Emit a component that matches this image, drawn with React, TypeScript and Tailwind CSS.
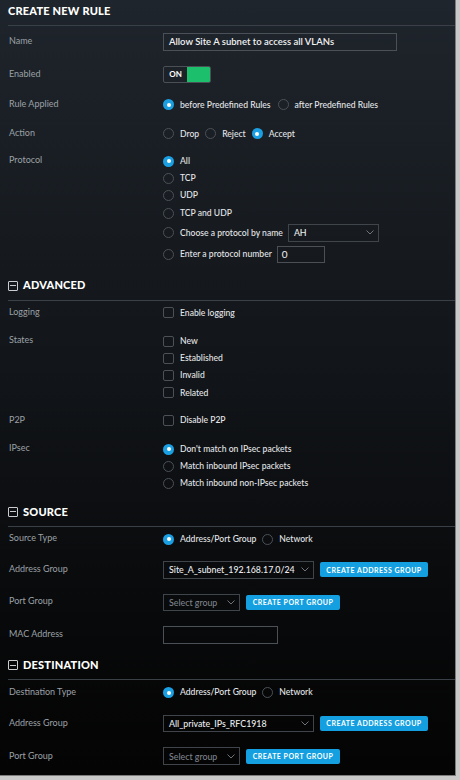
import React from "react";

const Radio = ({ checked }: { checked?: boolean }) =>
  checked ? (
    <span className="flex h-[11px] w-[11px] shrink-0 items-center justify-center rounded-full bg-[#1a9fe3]">
      <span className="h-[4px] w-[4px] rounded-full bg-white" />
    </span>
  ) : (
    <span className="h-[11px] w-[11px] shrink-0 rounded-full border border-[#4b5157]" />
  );

const Check = () => (
  <span className="h-[11px] w-[11px] shrink-0 rounded-[2px] border border-[#4b5157]" />
);

const Chevron = () => (
  <svg width="8" height="5" viewBox="0 0 8 5" className="shrink-0">
    <path d="M0.5 0.5 L4 4 L7.5 0.5" fill="none" stroke="#7a8087" strokeWidth="0.9" />
  </svg>
);

const Opt = ({ checked, text, radio = true }: { checked?: boolean; text: string; radio?: boolean }) => (
  <span className="flex items-center">
    {radio ? <Radio checked={checked} /> : <Check />}
    <span className="ml-[6px] text-[8.6px] font-medium text-[#e4e6e8]">{text}</span>
  </span>
);

const Label = ({ text }: { text: string }) => (
  <div className="w-[154px] shrink-0 pb-[2px] text-[#9ba1a7]">{text}</div>
);

const Section = ({ title, className }: { title: string; className: string }) => (
  <div className={"ml-[8px] border-b border-[#394047] pb-[7px] " + className}>
    <div className="flex h-[14px] items-center">
      <span className="flex h-[10px] w-[10px] items-center justify-center rounded-[1px] border border-[#c9ccd0]">
        <span className="h-[1px] w-[6px] bg-[#c9ccd0]" />
      </span>
      <span className="ml-[5px] text-[11px] font-black tracking-[0.2px] text-white">{title}</span>
    </div>
  </div>
);

const Btn = ({ text, w }: { text: string; w: string }) => (
  <span
    className={
      "flex h-[15px] items-center justify-center rounded-[2px] bg-[#139fe0] text-[7px] font-bold tracking-[0.5px] text-white " +
      w
    }
  >
    {text}
  </span>
);

const Select = ({ value, w, muted }: { value: string; w: string; muted?: boolean }) => (
  <span
    className={
      "flex h-full items-center justify-between border border-[#3f454b] pl-[5px] pr-[4px] text-[8.8px] font-medium " +
      w +
      (muted ? " text-[#7d838a]" : " text-[#eceef0]")
    }
  >
    <span>{value}</span>
    <Chevron />
  </span>
);

export default function App() {
  return (
    <div className="h-[780px] w-[460px] bg-[#c9c9c9]" style={{ fontFamily: "Lato, 'Open Sans', sans-serif" }}>
      <div className="h-[776px] w-[456px] overflow-hidden border-r border-b border-[#7c7c7c] bg-gradient-to-b from-[#1f252c] via-[#111418] to-[#040404] text-[9px]">
        {/* header */}
        <div className="ml-[8px] border-b border-[#394047] pt-[4px] pb-[7px]">
          <div className="flex h-[14px] items-center text-[11px] font-black tracking-[0.2px] text-white">
            CREATE NEW RULE
          </div>
        </div>

        <div className="pl-[9px]">
          <div className="mt-[7px] flex h-[17.5px] items-center">
            <Label text="Name" />
            <span className="flex h-full w-[234px] items-center border border-[#4a5056] pl-[5px] text-[9.5px] font-semibold text-[#f0f1f2]">
              Allow Site A subnet to access all VLANs
            </span>
          </div>

          <div className="mt-[15px] flex h-[17.5px] items-center">
            <Label text="Enabled" />
            <span className="flex h-full w-[48px] overflow-hidden rounded-[2px] border border-[#4a5056]">
              <span className="flex w-[23px] items-center justify-center text-[8px] font-bold text-white">ON</span>
              <span className="flex-1 bg-[#1cbf6c]" />
            </span>
          </div>

          <div className="mt-[13.5px] flex h-[17px] items-center">
            <Label text="Rule Applied" />
            <span className="flex items-center gap-[7px]">
              <Opt checked text="before Predefined Rules" />
              <Opt text="after Predefined Rules" />
            </span>
          </div>

          <div className="mt-[12px] flex h-[17px] items-center">
            <Label text="Action" />
            <span className="flex items-center gap-[6px]">
              <Opt text="Drop" />
              <Opt text="Reject" />
              <Opt checked text="Accept" />
            </span>
          </div>

          <div className="mt-[10px] flex items-start">
            <div className="flex h-[17.3px] items-center">
              <Label text="Protocol" />
            </div>
            <div className="flex flex-col">
              <div className="flex h-[17.3px] items-center"><Opt checked text="All" /></div>
              <div className="flex h-[17.3px] items-center"><Opt text="TCP" /></div>
              <div className="flex h-[17.3px] items-center"><Opt text="UDP" /></div>
              <div className="flex h-[17.3px] items-center"><Opt text="TCP and UDP" /></div>
              <div className="mt-[2.6px] flex h-[17.4px] items-center">
                <Opt text="Choose a protocol by name" />
                <span className="ml-[5px] h-full">
                  <Select value="AH" w="w-[91px]" />
                </span>
              </div>
              <div className="mt-[4.6px] flex h-[17px] items-center">
                <Opt text="Enter a protocol number" />
                <span className="ml-[5px] flex h-full w-[48px] items-center border border-[#4a5056] pl-[4px] text-[10px] text-[#f0f1f2]">
                  0
                </span>
              </div>
            </div>
          </div>
        </div>

        <Section title="ADVANCED" className="mt-[15.4px]" />

        <div className="pl-[9px]">
          <div className="mt-[3.8px] flex h-[17px] items-center">
            <Label text="Logging" />
            <Opt radio={false} text="Enable logging" />
          </div>

          <div className="mt-[11px] flex items-start">
            <div className="flex h-[17.3px] items-center">
              <Label text="States" />
            </div>
            <div className="flex flex-col">
              {["New", "Established", "Invalid", "Related"].map((s) => (
                <div key={s} className="flex h-[17.3px] items-center">
                  <Opt radio={false} text={s} />
                </div>
              ))}
            </div>
          </div>

          <div className="mt-[10.8px] flex h-[17px] items-center">
            <Label text="P2P" />
            <Opt radio={false} text="Disable P2P" />
          </div>

          <div className="mt-[11.3px] flex items-start">
            <div className="flex h-[17px] items-center">
              <Label text="IPsec" />
            </div>
            <div className="flex flex-col">
              <div className="flex h-[17px] items-center"><Opt checked text="Don't match on IPsec packets" /></div>
              <div className="flex h-[17px] items-center"><Opt text="Match inbound IPsec packets" /></div>
              <div className="flex h-[17px] items-center"><Opt text="Match inbound non-IPsec packets" /></div>
            </div>
          </div>
        </div>

        <Section title="SOURCE" className="mt-[13.2px]" />

        <div className="pl-[9px]">
          <div className="mt-[3.8px] flex h-[17px] items-center">
            <Label text="Source Type" />
            <span className="flex items-center gap-[6px]">
              <Opt checked text="Address/Port Group" />
              <Opt text="Network" />
            </span>
          </div>

          <div className="mt-[13.5px] flex h-[17.3px] items-center">
            <Label text="Address Group" />
            <Select value="Site_A_subnet_192.168.17.0/24" w="w-[151px]" />
            <span className="ml-[6px]"><Btn text="CREATE ADDRESS GROUP" w="w-[108px]" /></span>
          </div>

          <div className="mt-[15px] flex h-[17.4px] items-center">
            <Label text="Port Group" />
            <Select value="Select group" w="w-[77px]" muted />
            <span className="ml-[6px]"><Btn text="CREATE PORT GROUP" w="w-[94px]" /></span>
          </div>

          <div className="mt-[15.3px] flex h-[17.4px] items-center">
            <Label text="MAC Address" />
            <span className="h-full w-[115px] border border-[#4a5056]" />
          </div>
        </div>

        <Section title="DESTINATION" className="mt-[14.6px]" />

        <div className="pl-[9px]">
          <div className="mt-[4.2px] flex h-[17px] items-center">
            <Label text="Destination Type" />
            <span className="flex items-center gap-[6px]">
              <Opt checked text="Address/Port Group" />
              <Opt text="Network" />
            </span>
          </div>

          <div className="mt-[13.3px] flex h-[17.3px] items-center">
            <Label text="Address Group" />
            <Select value="All_private_IPs_RFC1918" w="w-[151px]" />
            <span className="ml-[6px]"><Btn text="CREATE ADDRESS GROUP" w="w-[108px]" /></span>
          </div>

          <div className="mt-[15.5px] flex h-[18px] items-center">
            <Label text="Port Group" />
            <Select value="Select group" w="w-[77px]" muted />
            <span className="ml-[6px]"><Btn text="CREATE PORT GROUP" w="w-[94px]" /></span>
          </div>
        </div>
      </div>
    </div>
  );
}
